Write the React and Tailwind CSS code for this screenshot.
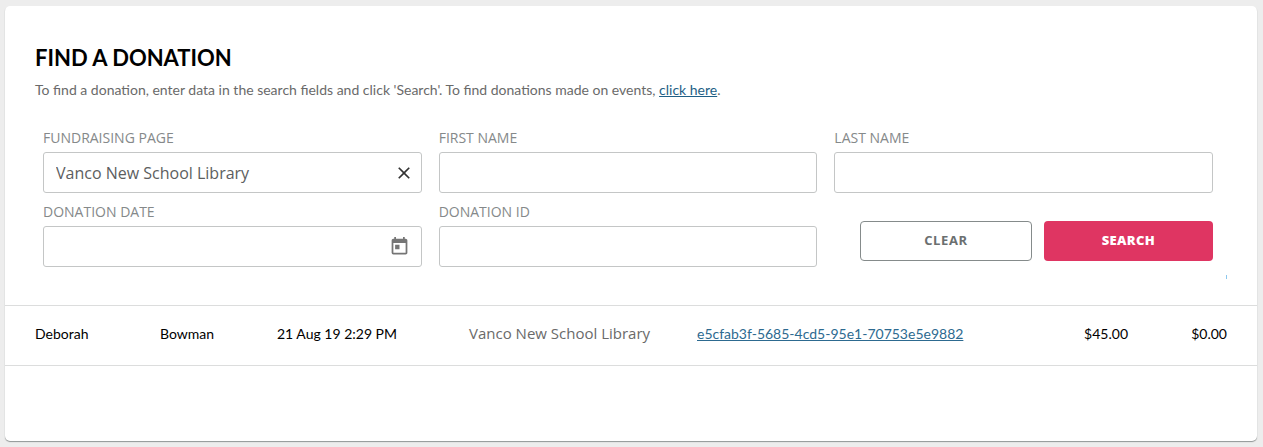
import { useState } from "react"
import { MdClose, MdToday } from "react-icons/md"

const donations = [
  {
    id: "e5cfab3f-5685-4cd5-95e1-70753e5e9882",
    firstName: "Deborah",
    lastName: "Bowman",
    date: "21 Aug 19 2:29 PM",
    page: "Vanco New School Library",
    amount: "$45.00",
    fee: "$0.00",
  },
]

const emptyForm = { page: "", firstName: "", lastName: "", date: "", donationId: "" }

function Field({ id, label, value, onChange, children }) {
  return (
    <div>
      <label htmlFor={id} className="block text-sm leading-5 text-[#85898a] uppercase">{label}</label>
      <div className="relative mt-1">
        <input
          type="text"
          id={id}
          value={value}
          onChange={onChange}
          className="block h-[41px] w-full rounded-[3px] border border-[#c4c6c6] bg-white px-3 text-base text-[#5c5e60] outline-none focus:border-[#85898a]"
        />
        {children}
      </div>
    </div>
  )
}

export default function App() {

  const [formData, setFormData] = useState({ ...emptyForm, page: "Vanco New School Library" });

  const handleChange = (e) => {
    setFormData({ ...formData, [e.target.id]: e.target.value });
  }

  const handleSubmit = (e) => {
    e.preventDefault();
  }

  return (
    <div className="min-h-screen bg-[#ededed] py-1.5 pr-1.5 pl-[5px] font-['Lato',sans-serif]">
      <main className="min-h-[435px] rounded-[5px] bg-white pt-[38px] shadow-[0_1px_1px_#909595]">
        <h1 className="px-[30px] text-[22px] leading-7 font-bold text-black uppercase">Find a donation</h1>
        <p className="mt-2 px-[30px] text-sm leading-5 text-[#6a6a6a]">
          To find a donation, enter data in the search fields and click 'Search'. To find donations made on events,{" "}
          <a href="#events" className="text-[#1f5f86] underline">click here</a>.
        </p>

        <form
          onSubmit={handleSubmit}
          className="relative mt-7 grid grid-cols-3 gap-x-[17px] gap-y-[9px] pr-11 pb-[38px] pl-[38px] font-['Open_Sans',sans-serif]"
        >
          <Field id="page" label="Fundraising page" value={formData.page} onChange={handleChange}>
            <button
              type="button"
              aria-label="Clear fundraising page"
              onClick={() => setFormData({ ...formData, page: "" })}
              className="absolute inset-y-0 right-2 flex items-center text-[#333]"
            >
              <MdClose size={20} />
            </button>
          </Field>
          <Field id="firstName" label="First name" value={formData.firstName} onChange={handleChange} />
          <Field id="lastName" label="Last name" value={formData.lastName} onChange={handleChange} />
          <Field id="date" label="Donation date" value={formData.date} onChange={handleChange}>
            <button type="button" aria-label="Pick a date" className="absolute inset-y-0 right-3 flex items-center text-[#757575]">
              <MdToday size={21} />
            </button>
          </Field>
          <Field id="donationId" label="Donation ID" value={formData.donationId} onChange={handleChange} />

          <div className="mb-1.5 ml-[26px] flex gap-3 self-end">
            <button
              type="button"
              onClick={() => setFormData(emptyForm)}
              className="h-10 flex-1 rounded-sm border border-[#858b8b] bg-white text-[13px] font-bold tracking-wider text-[#6b6f70] uppercase"
            >
              Clear
            </button>
            <button className="h-10 flex-1 rounded-sm bg-[#df3562] text-[13px] font-extrabold tracking-wide text-white uppercase">Search</button>
          </div>
          <span className="absolute right-[30px] bottom-[26px] h-1 w-px bg-[#8cc8ee]"></span>
        </form>

        <table className="w-full table-fixed border-y border-[#dcdddd] text-sm text-black">
          <colgroup>
            <col className="w-[155px]" />
            <col className="w-[117px]" />
            <col className="w-[192px]" />
            <col className="w-[228px]" />
            <col />
            <col className="w-[100px]" />
            <col className="w-[129px]" />
          </colgroup>
          <tbody>
            {donations.map((donation) => (
              <tr key={donation.id} className="h-[60px]">
                <td className="pb-1 pl-[30px]">{donation.firstName}</td>
                <td className="pb-1">{donation.lastName}</td>
                <td className="pb-1">{donation.date}</td>
                <td className="pb-1 font-['Open_Sans',sans-serif] text-[15px] text-[#6a6a6a]">{donation.page}</td>
                <td className="pb-1">
                  <a href={`#${donation.id}`} className="text-[#2d6a90] underline">{donation.id}</a>
                </td>
                <td className="pb-1 text-right">{donation.amount}</td>
                <td className="pr-[30px] pb-1 text-right">{donation.fee}</td>
              </tr>
            ))}
          </tbody>
        </table>
      </main>
    </div>
  )
}
